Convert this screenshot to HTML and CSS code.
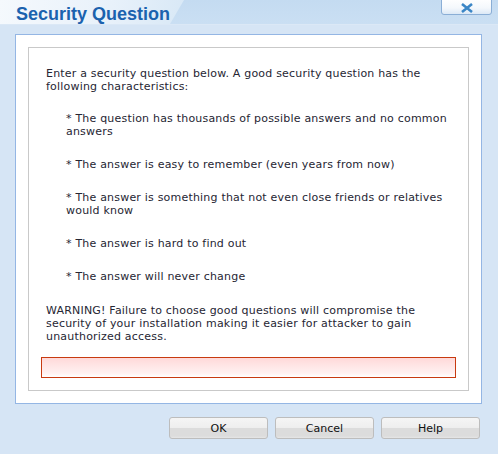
FILE: index.html
```html
<!DOCTYPE html>
<html>
<head>
<meta charset="utf-8">
<link rel="stylesheet" href="styles.css">
</head>
<body>
<div class="dialog">
  <div class="titlebar">
    <div class="title-tab"><span class="title">Security Question</span></div>
    <button class="close" aria-label="Close">
      <svg width="14" height="10" viewBox="0 0 14 10"><path d="M2 1 L12 9 M12 1 L2 9" stroke="#3b86c6" stroke-width="2.6" stroke-linecap="butt"/></svg>
    </button>
  </div>
  <div class="panel">
    <div class="box">
      <p class="intro">Enter a security question below. A good security question has the following characteristics:</p>
      <p class="item">* The question has thousands of possible answers and no common answers</p>
      <p class="item">* The answer is easy to remember (even years from now)</p>
      <p class="item">* The answer is something that not even close friends or relatives would know</p>
      <p class="item">* The answer is hard to find out</p>
      <p class="item">* The answer will never change</p>
      <p class="warn">WARNING! Failure to choose good questions will compromise the security of your installation making it easier for attacker to gain unauthorized access.</p>
      <input class="field" type="text">
    </div>
  </div>
  <div class="footer">
    <button class="btn">OK</button>
    <button class="btn">Cancel</button>
    <button class="btn">Help</button>
  </div>
</div>
</body>
</html>
```
FILE: styles.css
```css
html, body {
  margin: 0;
  padding: 0;
  background: #d6e5f5;
}
.dialog {
  width: 498px;
  height: 454px;
  font-family: "DejaVu Sans", Verdana, sans-serif;
}
.titlebar {
  position: relative;
  height: 24px;
  background: linear-gradient(#c4dbf1, #cadff3);
  border-bottom: 1px solid #dbe8f6;
}
.title-tab {
  height: 24px;
  width: 184px;
  background: linear-gradient(100deg, #f5f9fd 0%, #e8f1fa 60%, #d8e8f6 100%);
  clip-path: polygon(0 0, 184px 0, 170px 24px, 0 24px);
}
.title {
  display: block;
  padding-left: 16px;
  padding-top: 4px;
  font-family: "Liberation Sans", Arial, sans-serif;
  font-weight: bold;
  font-size: 18px;
  line-height: 20px;
  color: #1b62ae;
}
.close {
  position: absolute;
  top: -2px;
  left: 441px;
  width: 51px;
  height: 17px;
  padding: 0;
  border: 1px solid #8aaed6;
  border-radius: 0 0 3px 3px;
  background: linear-gradient(#ffffff, #f4f8fc 60%, #dce9f6);
  display: flex;
  align-items: center;
  justify-content: center;
  padding-top: 2px;
}
.close svg { display: block; }
.panel {
  margin: 9px 0 0 15px;
  width: 441px;
  padding: 12px;
  background: #fff;
  border: 1px solid #94b6e4;
}
.box {
  border: 1px solid #c9c9c9;
  padding: 13px 12px 12px 12px;
  height: 317px;
  display: flex;
  flex-direction: column;
}
.box p {
  margin: 0 0 0 5px;
  font-size: 11px;
  line-height: 13px;
  letter-spacing: 0.2px;
  color: #262633;
}
.box .intro { margin-bottom: 19.5px; margin-top: 5.5px; }
.box .item { margin-left: 25px; margin-bottom: 20px; }
.box .warn { margin-top: 1px; }
.field {
  margin-top: 13.5px;
  height: 22px;
  box-sizing: border-box;
  border: 1px solid #c83a10;
  background: linear-gradient(#ffd9d9, #fff1f1 80%, #fff 100%);
  padding: 0;
  outline: none;
}
.footer {
  display: flex;
  justify-content: flex-end;
  gap: 7px;
  padding-right: 18px;
  margin-top: 13px;
}
.btn {
  width: 99px;
  height: 22px;
  padding: 0;
  border: 1px solid #bdbdbd;
  border-radius: 3px;
  background: linear-gradient(#f5f5f5 0%, #eeeeee 50%, #dcdcdc 50%, #dcdcdc 90%, #e6e6e6 100%);
  font-family: "DejaVu Sans", Verdana, sans-serif;
  font-size: 11px;
  color: #111;
}
```
